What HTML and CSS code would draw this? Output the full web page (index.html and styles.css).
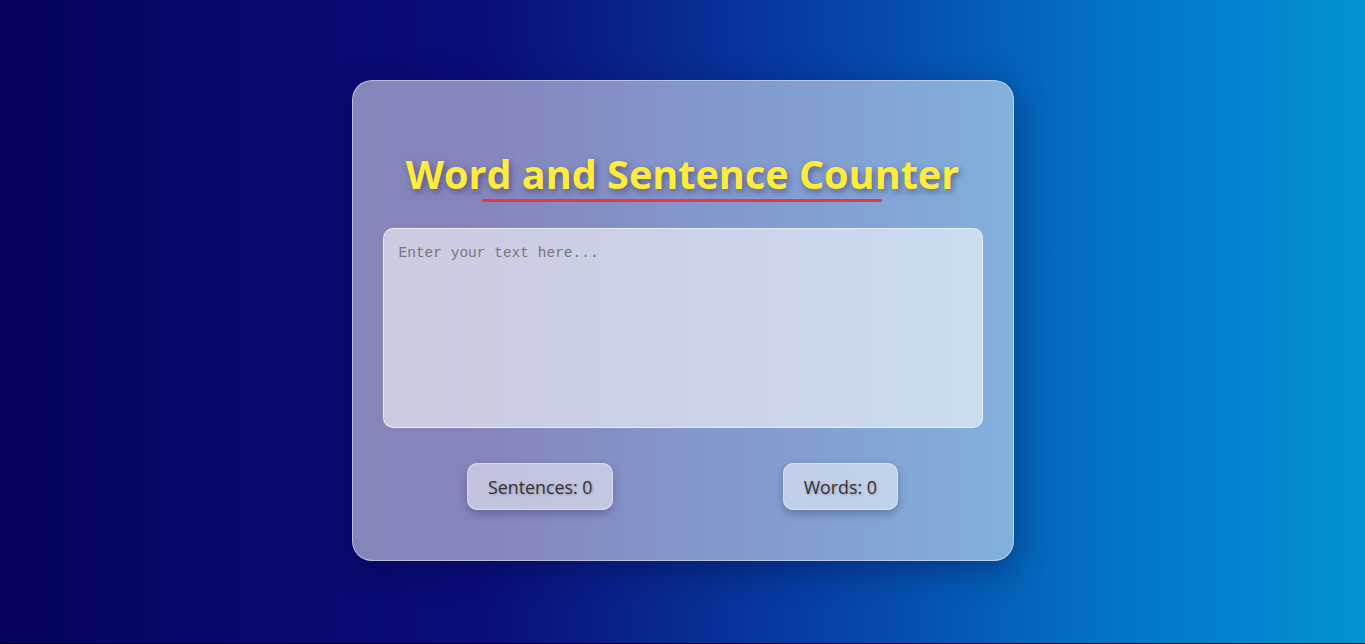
FILE: index.html
```html
<!DOCTYPE html>
<html lang="en">
<head>
<meta charset="utf-8">
<title>Word and Sentence Counter</title>
<link rel="stylesheet" href="styles.css">
</head>
<body>
<main class="card">
  <h1 class="title">Word and Sentence Counter</h1>
  <textarea class="input" placeholder="Enter your text here..."></textarea>
  <div class="stats">
    <div class="stat">Sentences: <span>0</span></div>
    <div class="stat">Words: <span>0</span></div>
  </div>
</main>
</body>
</html>
```
FILE: styles.css
```css
html, body {
  margin: 0;
  padding: 0;
}
html {
  background: #000;
}
body {
  height: 643px;
  box-sizing: border-box;
  padding-top: 80px;
  display: flex;
  flex-direction: column;
  align-items: center;
  background: linear-gradient(to right, #04045c 0%, #0a0c7a 35%, #0644a8 62%, #0375c4 82%, #0292d6 100%);
  font-family: "Open Sans", "Noto Sans", sans-serif;
}
.card {
  width: 662px;
  height: 481px;
  box-sizing: border-box;
  padding: 30px 30px;
  background: rgba(255, 255, 255, 0.5);
  border: 1px solid rgba(255, 255, 255, 0.45);
  border-radius: 20px;
  box-shadow: 0 8px 32px rgba(0, 0, 40, 0.35);
  display: flex;
  flex-direction: column;
  align-items: center;
}
.title {
  position: relative;
  margin: 38px 0 29px;
  font-size: 39.6px;
  font-weight: 700;
  line-height: 50px;
  color: #ffeb3b;
  text-shadow: 2px 3px 6px rgba(40, 40, 80, 0.5);
  letter-spacing: 0;
}
.title::after {
  content: "";
  position: absolute;
  left: 50%;
  bottom: -3px;
  width: 400px;
  height: 3px;
  margin-left: -200px;
  background: #ee3344;
  border-radius: 2px;
}
.input {
  width: 600px;
  height: 200px;
  box-sizing: border-box;
  padding: 16px 15px;
  resize: none;
  background: rgba(255, 255, 255, 0.58);
  border: 1px solid rgba(255, 255, 255, 0.6);
  border-radius: 10px;
  font-family: "Liberation Mono", "DejaVu Sans Mono", monospace;
  font-size: 14.5px;
  color: #333;
  outline: none;
}
.input::placeholder {
  color: #777;
}
.stats {
  width: 600px;
  margin-top: 35px;
  display: flex;
  justify-content: space-around;
}
.stat {
  padding: 0 20px;
  height: 47px;
  line-height: 47px;
  box-sizing: border-box;
  background: rgba(255, 255, 255, 0.5);
  border: 1px solid rgba(255, 255, 255, 0.4);
  border-radius: 10px;
  box-shadow: 0 4px 8px rgba(0, 0, 40, 0.25);
  font-size: 17.8px;
  color: #333;
  text-shadow: 1px 1px 3px rgba(0, 0, 0, 0.25);
}
```
